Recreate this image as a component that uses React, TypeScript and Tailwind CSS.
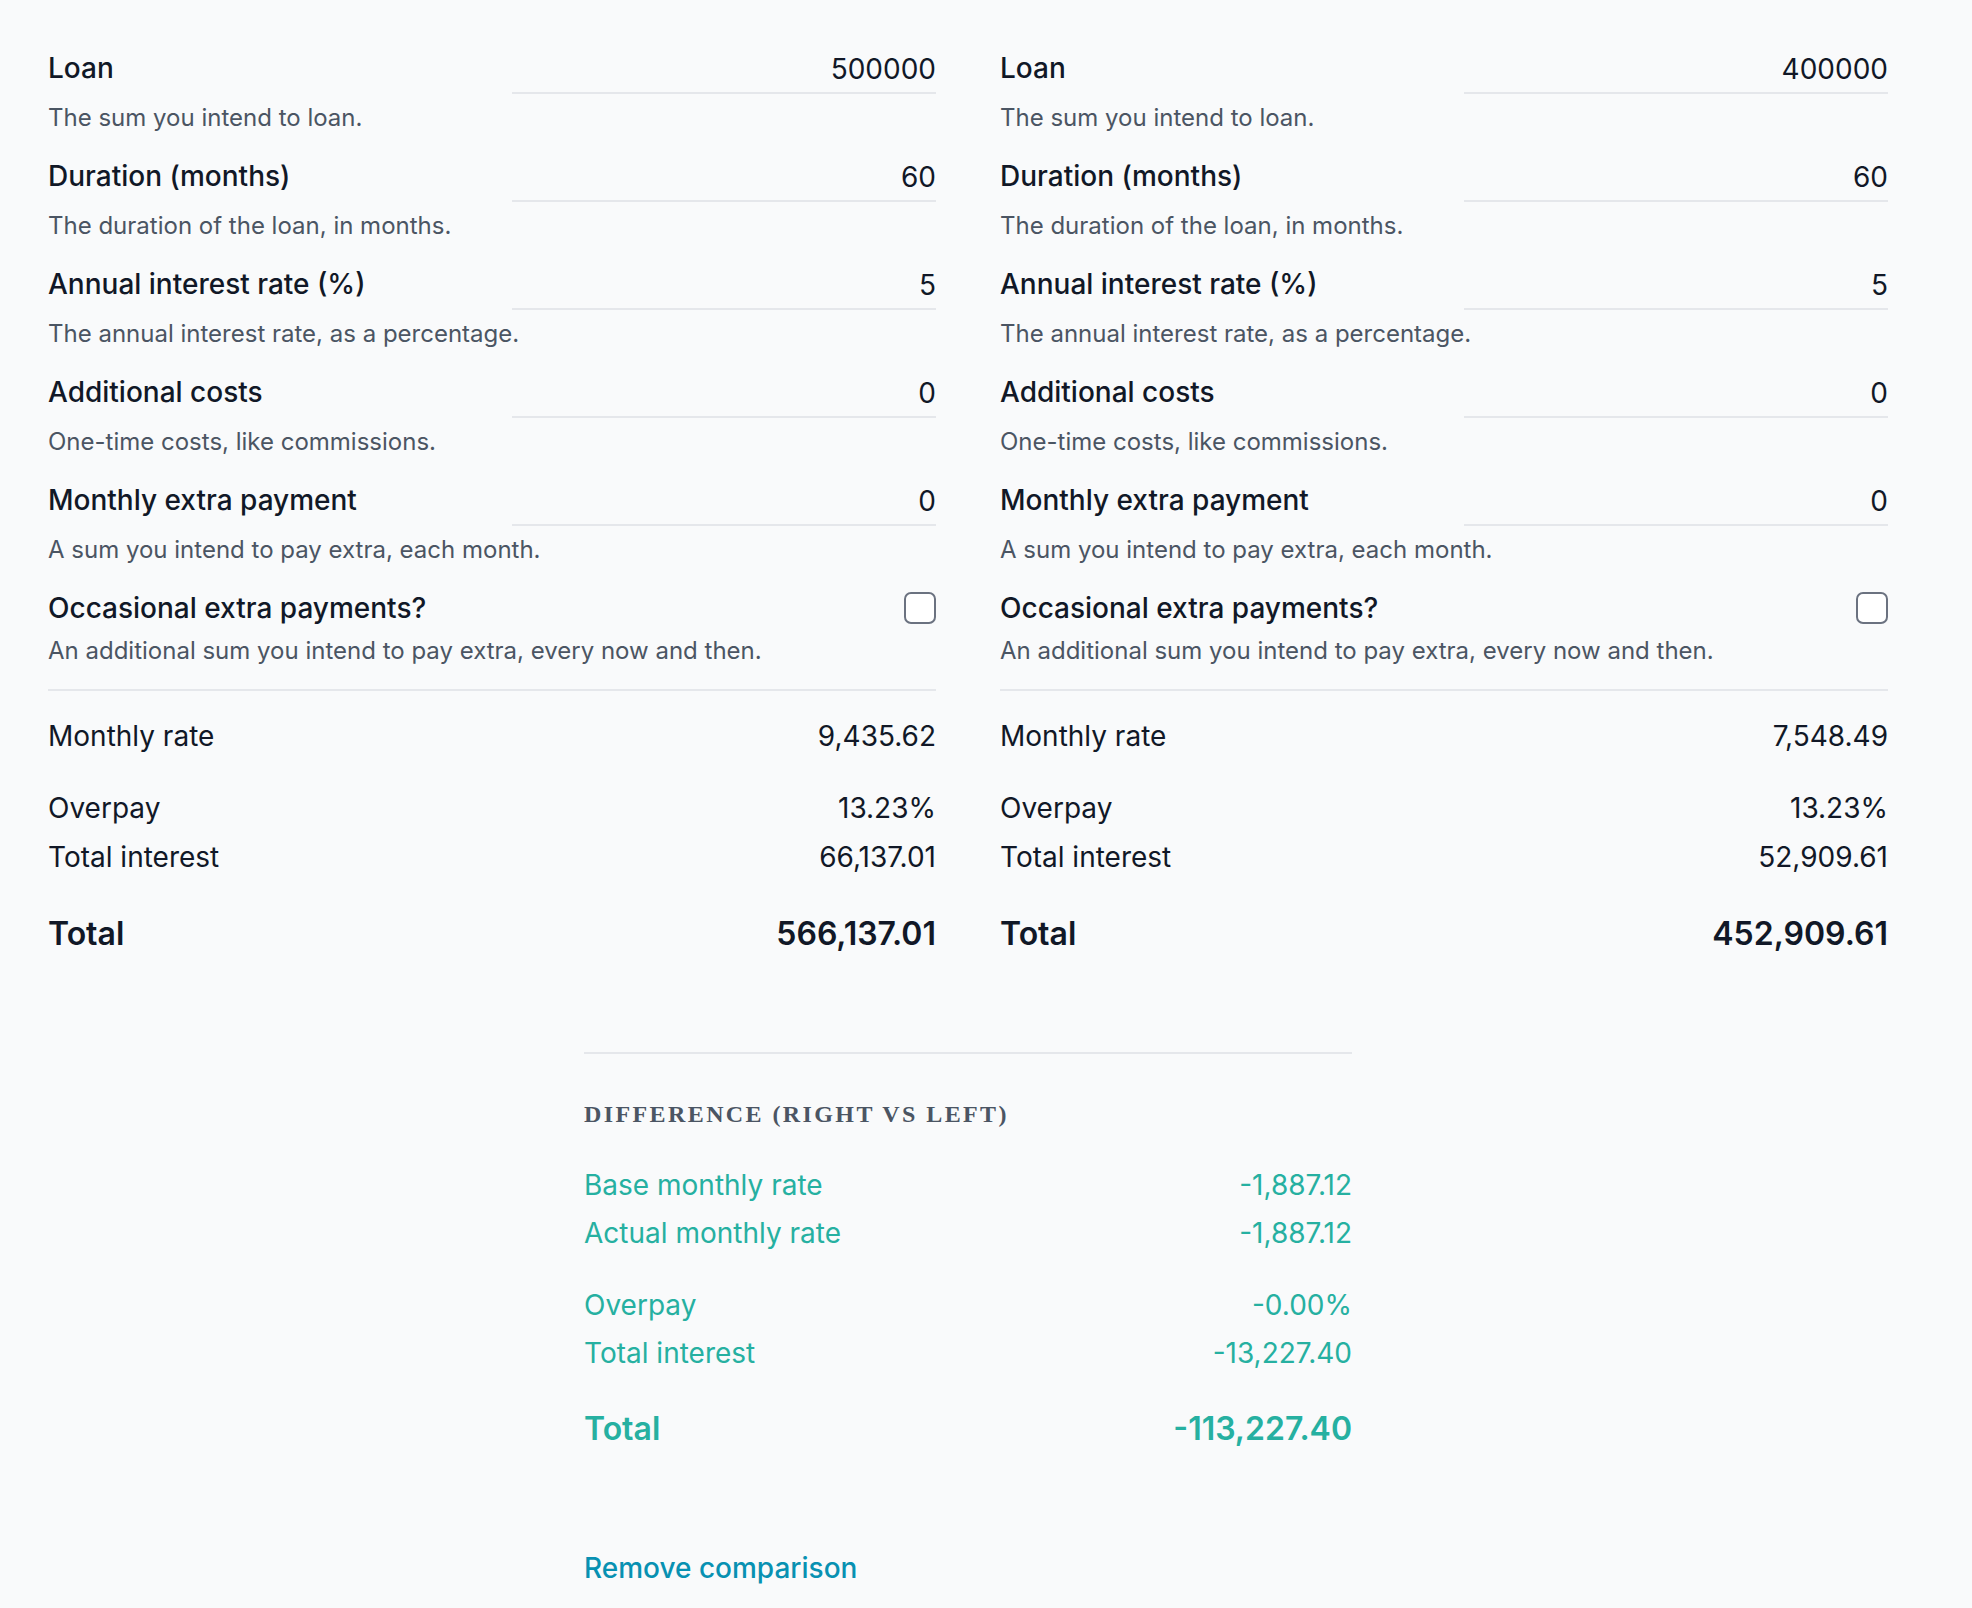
import React from "react";

type Field = { label: string; desc: string; values: [string, string] };

const fields: Field[] = [
  { label: "Loan", desc: "The sum you intend to loan.", values: ["500000", "400000"] },
  { label: "Duration (months)", desc: "The duration of the loan, in months.", values: ["60", "60"] },
  { label: "Annual interest rate (%)", desc: "The annual interest rate, as a percentage.", values: ["5", "5"] },
  { label: "Additional costs", desc: "One-time costs, like commissions.", values: ["0", "0"] },
  { label: "Monthly extra payment", desc: "A sum you intend to pay extra, each month.", values: ["0", "0"] },
];

type Results = { monthly: string; overpay: string; interest: string; total: string };

const results: [Results, Results] = [
  { monthly: "9,435.62", overpay: "13.23%", interest: "66,137.01", total: "566,137.01" },
  { monthly: "7,548.49", overpay: "13.23%", interest: "52,909.61", total: "452,909.61" },
];

function Column({ idx }: { idx: 0 | 1 }) {
  const r = results[idx];
  return (
    <div className="flex w-[888px] flex-col">
      {fields.map((f) => (
        <div key={f.label} className="mb-[20px] flex flex-col">
          <div className="grid grid-cols-2 items-start gap-x-10">
            <label className="text-[28px] leading-[41px] font-medium text-[#111827]">{f.label}</label>
            <input
              readOnly
              value={f.values[idx]}
              className="h-[46px] w-full border-b-2 border-[#e5e7eb] bg-transparent pb-[3px] text-right text-[28px] text-[#111827] outline-none"
            />
          </div>
          <p className="mt-[6px] text-[24px] leading-[36px] text-[#4b5563]">{f.desc}</p>
        </div>
      ))}
      <div className="mb-[20px] flex flex-col">
        <div className="flex h-[42px] items-start justify-between">
          <label className="text-[28px] leading-[41px] font-medium text-[#111827]">Occasional extra payments?</label>
          <input
            type="checkbox"
            className="mt-[4px] h-[32px] w-[32px] appearance-none rounded-[7px] border-2 border-[#6b7280] bg-white"
          />
        </div>
        <p className="mt-[3px] text-[24px] leading-[36px] text-[#4b5563]">
          An additional sum you intend to pay extra, every now and then.
        </p>
      </div>
      <div className="border-t-2 border-[#e5e7eb] pt-[24px] text-[#111827]">
        <div className="flex justify-between text-[28px] leading-[42px]">
          <span>Monthly rate</span>
          <span>{r.monthly}</span>
        </div>
        <div className="mt-[30px] flex justify-between text-[28px] leading-[42px]">
          <span>Overpay</span>
          <span>{r.overpay}</span>
        </div>
        <div className="mt-[7px] flex justify-between text-[28px] leading-[42px]">
          <span>Total interest</span>
          <span>{r.interest}</span>
        </div>
        <div className="mt-[35px] flex justify-between text-[32px] leading-[42px] font-semibold">
          <span>Total</span>
          <span>{r.total}</span>
        </div>
      </div>
    </div>
  );
}

export default function App() {
  return (
    <div className="min-h-screen bg-[#f9fafb] pt-[48px] pr-[84px] pb-[40px] pl-[48px] font-[family-name:Inter,sans-serif] antialiased">
      <div className="flex gap-16">
        <Column idx={0} />
        <Column idx={1} />
      </div>
      <div className="mx-auto mt-[97px] w-[768px] border-t-2 border-[#e5e7eb] pt-[42px]">
        <h3 className="font-[family-name:'Liberation_Serif',serif] text-[24px] leading-[36px] font-bold tracking-widest text-[#4b5563] uppercase">
          Difference (right vs left)
        </h3>
        <div className="mt-[32px] text-[#26b0a1]">
          <div className="flex justify-between text-[28px] leading-[42px]">
            <span>Base monthly rate</span>
            <span>-1,887.12</span>
          </div>
          <div className="mt-[6px] flex justify-between text-[28px] leading-[42px]">
            <span>Actual monthly rate</span>
            <span>-1,887.12</span>
          </div>
          <div className="mt-[30px] flex justify-between text-[28px] leading-[42px]">
            <span>Overpay</span>
            <span>-0.00%</span>
          </div>
          <div className="mt-[6px] flex justify-between text-[28px] leading-[42px]">
            <span>Total interest</span>
            <span>-13,227.40</span>
          </div>
          <div className="mt-[34px] flex justify-between text-[32px] leading-[42px] font-semibold">
            <span>Total</span>
            <span>-113,227.40</span>
          </div>
        </div>
        <button className="mt-[97px] text-[28px] leading-[42px] font-medium text-[#0891b2]">Remove comparison</button>
      </div>
    </div>
  );
}
